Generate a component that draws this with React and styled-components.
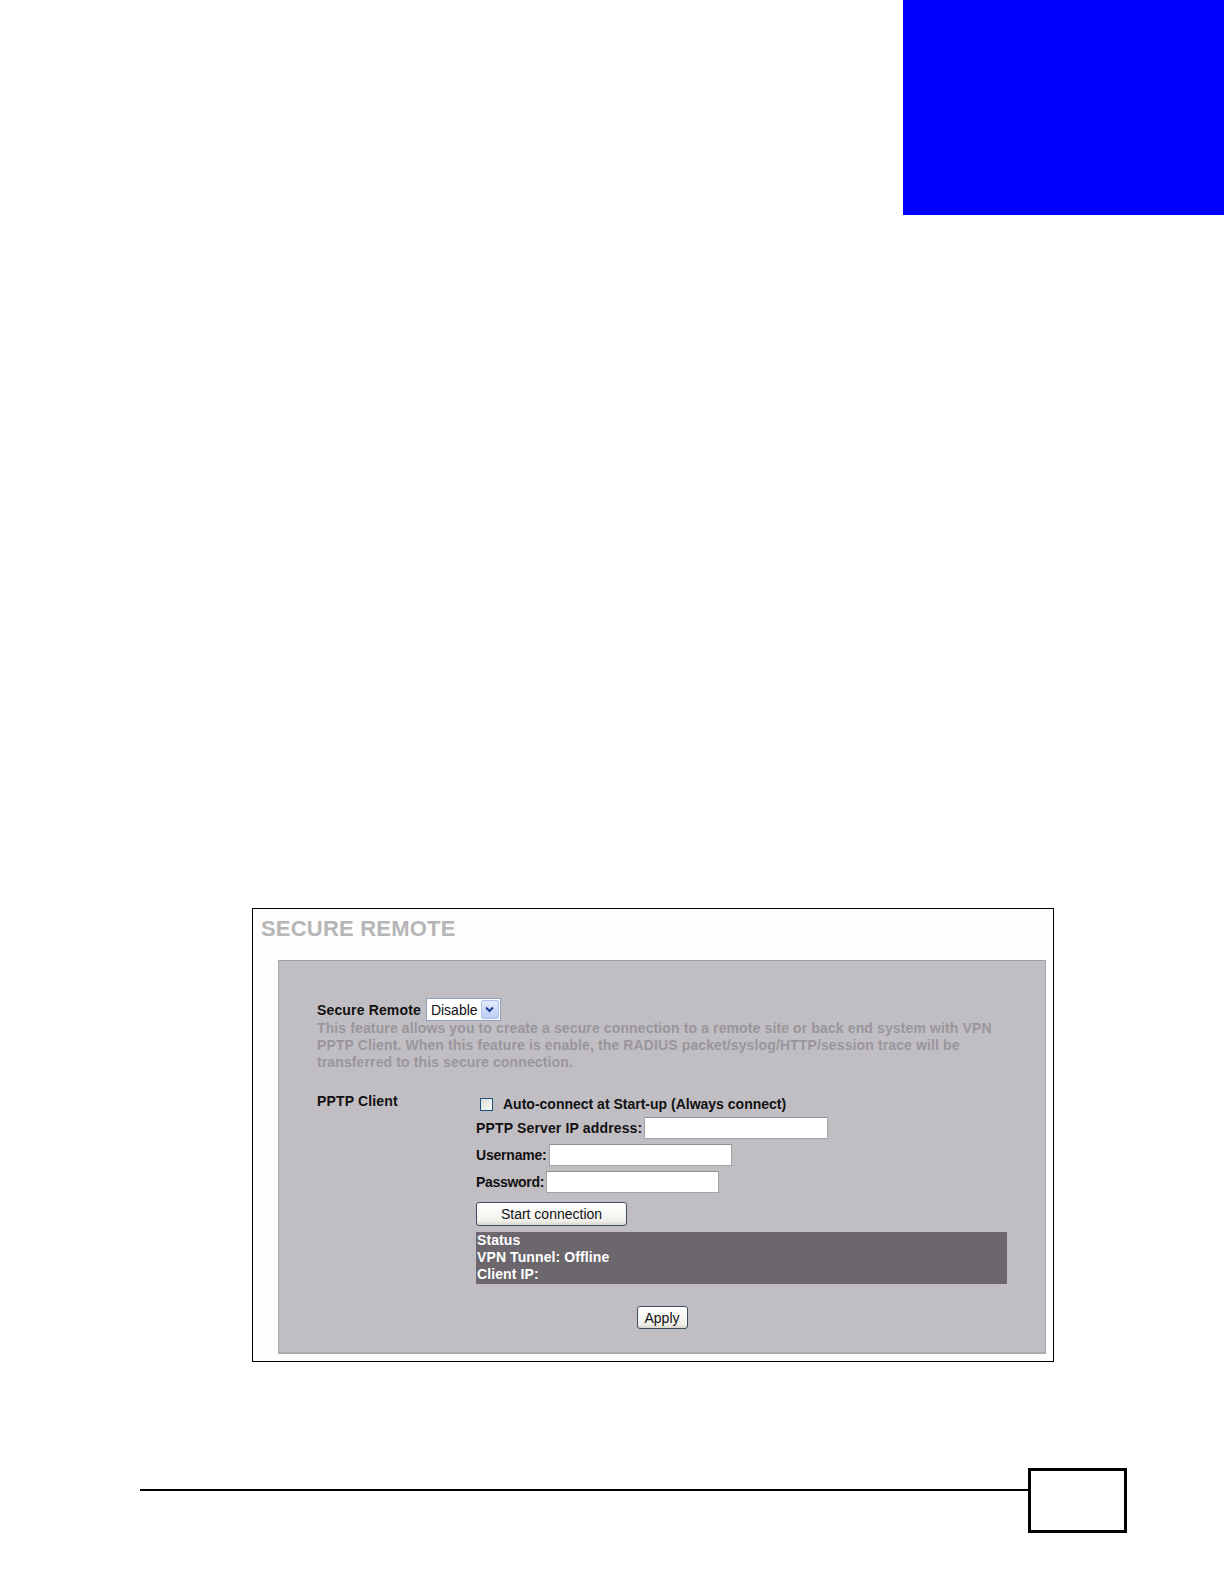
import React from 'react'
import styled, { createGlobalStyle } from 'styled-components'

const GlobalStyle = createGlobalStyle`
  html, body {
    margin: 0;
    padding: 0;
    background: #ffffff;
  }
  body {
    font-family: "Liberation Sans", Arial, sans-serif;
  }
`;

const Page = styled.div`
  width: 1224px;
  height: 1584px;
  display: flex;
  flex-direction: column;
  overflow: hidden;
`;

const TopBar = styled.div`
  display: flex;
  justify-content: flex-end;
`;

const ChapterTab = styled.div`
  width: 321px;
  height: 215px;
  background: #0000ff;
`;

const Frame = styled.div`
  margin: 693px 0 0 252px;
  width: 800px;
  height: 452px;
  border: 1px solid #000;
  background: #fdfdfd;
  display: flex;
  flex-direction: column;
`;

const Title = styled.h1`
  margin: 0;
  padding: 7px 0 0 8px;
  height: 42px;
  box-sizing: border-box;
  font-size: 22px;
  font-weight: 700;
  color: #b6b6b6;
  letter-spacing: 0.2px;
`;

const Panel = styled.div`
  margin: 9px 7px 7px 25px;
  flex: 1;
  background: #c1bec3;
  border: 1px solid #a9a7ab;
  border-top-color: #9f9da1;
  box-shadow: inset 0 -1px 0 #b0aeb2;
  padding: 38px 38px 0 38px;
  display: flex;
  flex-direction: column;
`;

const Row = styled.div`
  display: flex;
  align-items: center;
  gap: 5px;
  height: 21px;
`;

const Label = styled.span`
  font-size: 14px;
  font-weight: 700;
  color: #111;
  letter-spacing: ${p => p.$ls ?? 0.15}px;
  white-space: nowrap;
`;

const FakeSelect = styled.div`
  width: 75px;
  height: 23px;
  box-sizing: border-box;
  border: 1px solid #8ea2bf;
  background: #fff;
  display: flex;
  align-items: center;
  justify-content: space-between;
  padding: 1px 1px 1px 4px;
  font-size: 14px;
  color: #111;
`;

const ArrowBox = styled.div`
  width: 18px;
  height: 19px;
  border-radius: 2px;
  background: linear-gradient(#e3ebfc, #b9cdf6);
  border: 1px solid #b0c2e8;
  box-sizing: border-box;
  display: flex;
  align-items: center;
  justify-content: center;
`;

const Description = styled.p`
  margin: 0;
  font-size: 14px;
  font-weight: 700;
  line-height: 17px;
  color: #99969b;
  letter-spacing: 0.12px;
`;

const ClientGrid = styled.div`
  margin-top: 21px;
  display: grid;
  grid-template-columns: 159px 1fr;
`;

const ClientLabel = styled(Label)`
  line-height: 18px;
`;

const Fields = styled.div`
  padding-top: 1px;
  display: flex;
  flex-direction: column;
`;

const FieldRow = styled.div`
  display: flex;
  align-items: center;
  height: ${p => p.$h}px;
`;

const CheckBox = styled.span`
  width: 13px;
  height: 13px;
  box-sizing: border-box;
  border: 1px solid #1c5180;
  background: linear-gradient(135deg, #dcdcd6, #fbfbf9);
  margin: 0 10px 0 4px;
`;

const TextInput = styled.div`
  width: ${p => p.$w}px;
  height: 22px;
  box-sizing: border-box;
  background: #fff;
  border: 1px solid #a4a4a4;
  border-top-color: #8f8f8f;
  margin-left: 2px;
`;

const Button = styled.div`
  width: ${p => p.$w}px;
  height: ${p => p.$h || 23}px;
  box-sizing: border-box;
  border: 1px solid #3f4e5e;
  border-radius: 3px;
  background: linear-gradient(#ffffff, #f1f1ec 80%, #d8d6cc);
  display: flex;
  align-items: center;
  justify-content: center;
  font-size: 14px;
  color: #111;
`;

const StatusBox = styled.div`
  background: #6b676d;
  padding: 0 0 0 1px;
  height: 52px;
  box-sizing: border-box;
  font-size: 14px;
  font-weight: 700;
  line-height: 17px;
  color: #fff;
  letter-spacing: 0.1px;
`;

const ApplyRow = styled.div`
  margin-top: 22px;
  display: flex;
  justify-content: center;
`;

const Footer = styled.div`
  margin: 106px 0 0 140px;
  display: flex;
  align-items: flex-start;
`;

const FooterLine = styled.div`
  width: 888px;
  height: 2px;
  background: #000;
  margin-top: 21px;
`;

const PageBox = styled.div`
  width: 99px;
  height: 65px;
  box-sizing: border-box;
  border: 3px solid #000;
`;

const Chevron = () => (
  <svg width="9" height="7" viewBox="0 0 9 7">
    <path d="M1 1.5 L4.5 5 L8 1.5" fill="none" stroke="#1d3f8f" strokeWidth="2" />
  </svg>
)

export default function App() {
  return (
    <Page>
      <GlobalStyle />
      <TopBar>
        <ChapterTab />
      </TopBar>

      <Frame>
        <Title>SECURE REMOTE</Title>
        <Panel>
          <Row>
            <Label>Secure Remote</Label>
            <FakeSelect>
              <span>Disable</span>
              <ArrowBox><Chevron /></ArrowBox>
            </FakeSelect>
          </Row>
          <Description>
            This feature allows you to create a secure connection to a remote site or back end system with VPN
            PPTP Client. When this feature is enable, the RADIUS packet/syslog/HTTP/session trace will be
            transferred to this secure connection.
          </Description>

          <ClientGrid>
            <ClientLabel>PPTP Client</ClientLabel>
            <Fields>
              <FieldRow $h={22}>
                <CheckBox />
                <Label $ls={0}>Auto-connect at Start-up (Always connect)</Label>
              </FieldRow>
              <FieldRow $h={26}>
                <Label>PPTP Server IP address:</Label>
                <TextInput $w={184} />
              </FieldRow>
              <FieldRow $h={28}>
                <Label $ls={-0.2}>Username:</Label>
                <TextInput $w={183} />
              </FieldRow>
              <FieldRow $h={26}>
                <Label $ls={-0.3}>Password:</Label>
                <TextInput $w={173} />
              </FieldRow>
              <FieldRow $h={37}>
                <Button $w={151} $h={24}>Start connection</Button>
              </FieldRow>
              <StatusBox>
                Status<br />
                VPN Tunnel: Offline<br />
                Client IP:
              </StatusBox>
            </Fields>
          </ClientGrid>

          <ApplyRow>
            <Button $w={51}>Apply</Button>
          </ApplyRow>
        </Panel>
      </Frame>

      <Footer>
        <FooterLine />
        <PageBox />
      </Footer>
    </Page>
  )
}
